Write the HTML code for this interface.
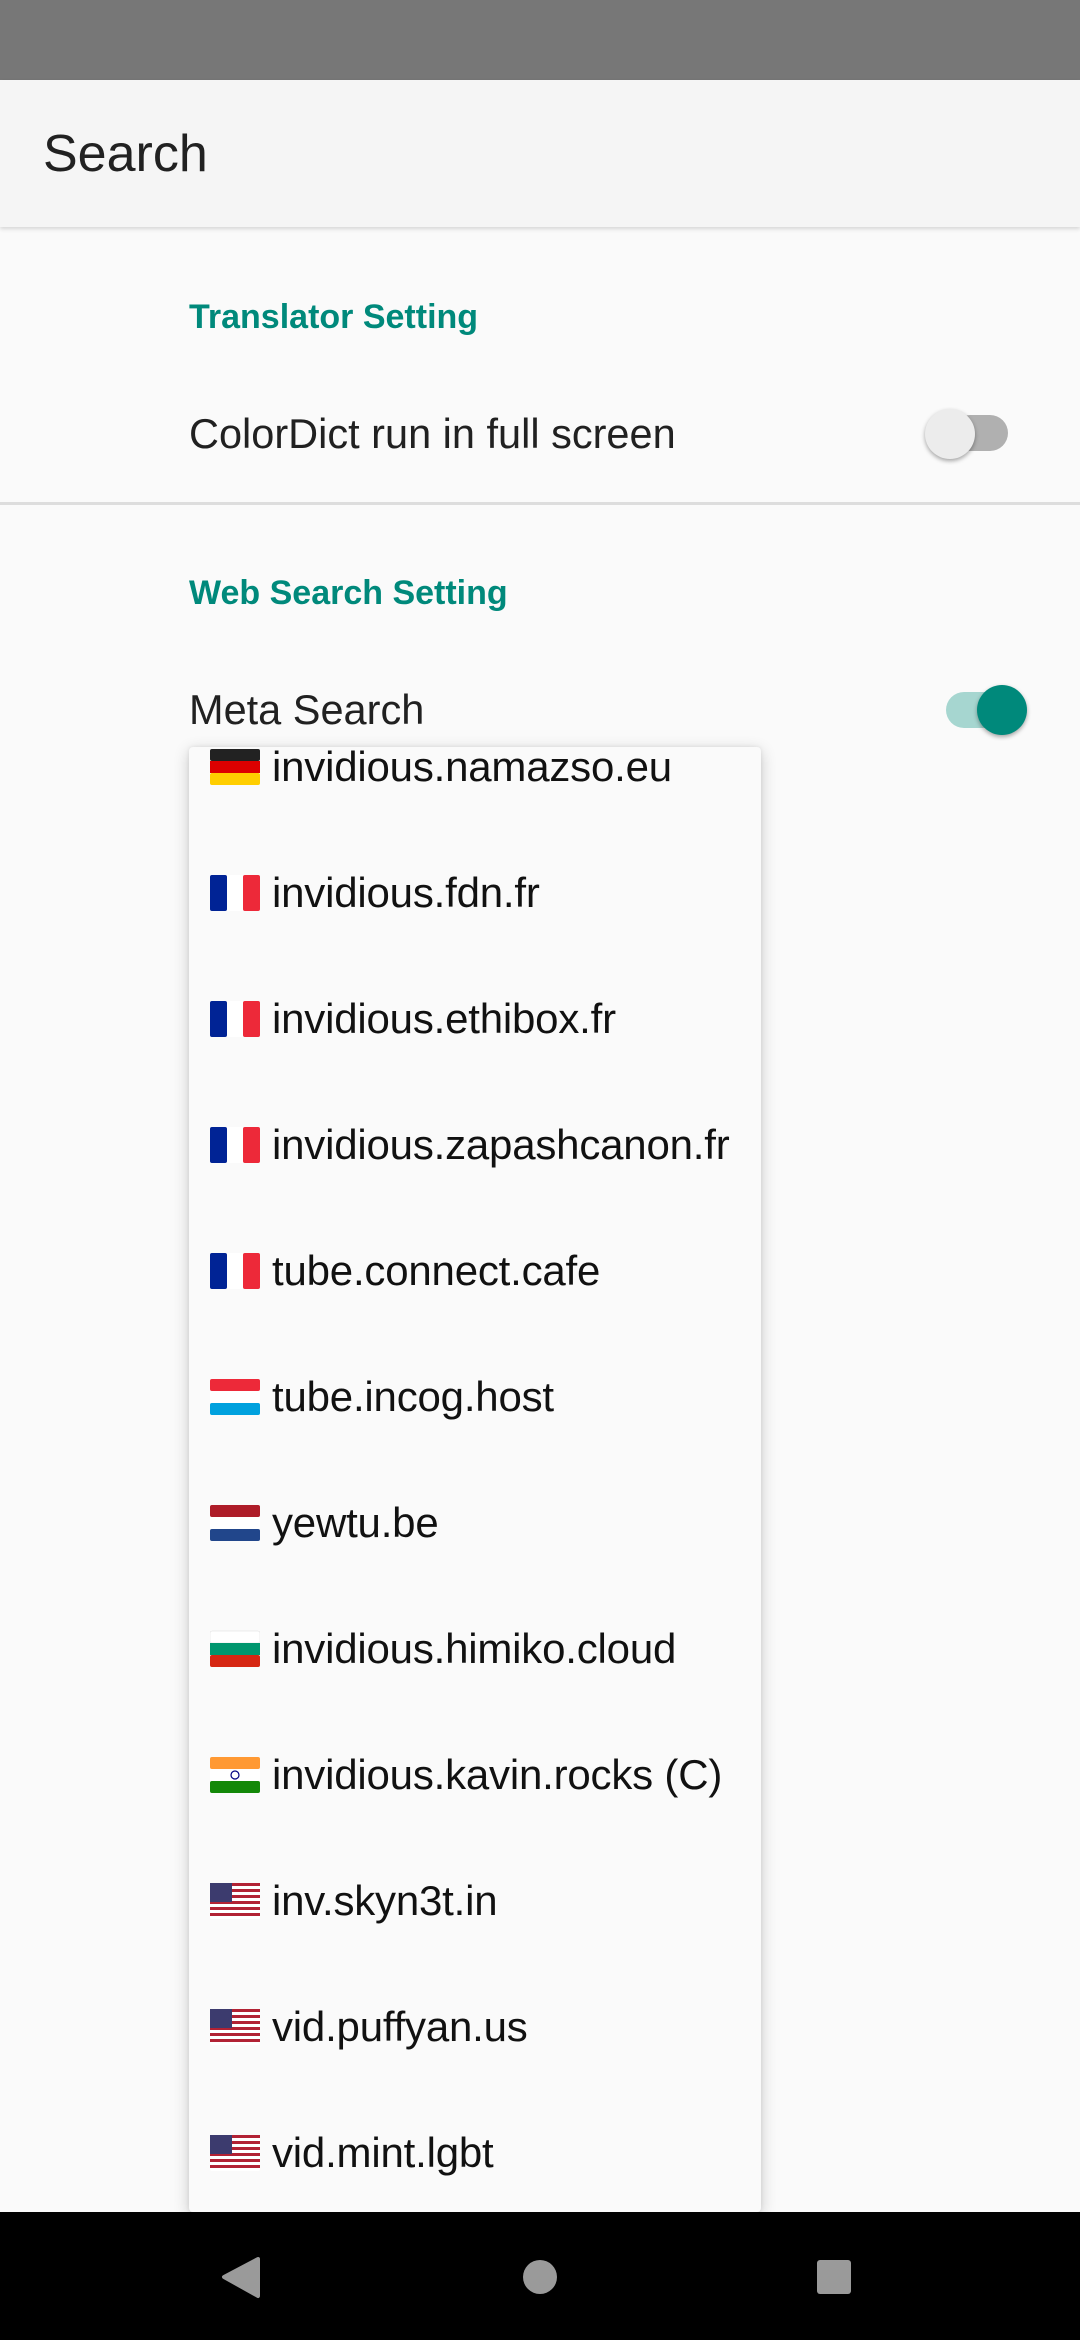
<!DOCTYPE html>
<html><head><meta charset="utf-8"><style>
*{margin:0;padding:0;box-sizing:border-box}
body{width:1080px;height:2340px;overflow:hidden;background:#fafafa;font-family:"Liberation Sans",sans-serif;position:relative;color:#212121}
.abs{position:absolute}
.status{left:0;top:0;width:1080px;height:80px;background:#777}
.bar{left:0;top:80px;width:1080px;height:147px;background:#f5f5f5;box-shadow:0 2px 4px rgba(0,0,0,.15)}
.title{left:43px;top:123px;font-size:52px;line-height:62px;color:#212121}
.cat{left:189px;font-size:34px;font-weight:bold;color:#00897b;line-height:44px}
.item{left:189px;font-size:41.5px;line-height:50px;color:#212121}
.div{left:0;top:502px;width:1080px;height:3px;background:#ddd}
.popup{left:189px;top:747px;width:572px;height:1465px;background:#fafafa;border-radius:4px;box-shadow:0 4px 16px rgba(0,0,0,.2),0 0 4px rgba(0,0,0,.08);overflow:hidden}
.row{position:absolute;left:0;height:60px;display:flex;align-items:center}
.row svg{margin-left:21px;width:50px;height:38px;flex:none}
.row span{margin-left:12px;font-size:42px;color:#111;white-space:nowrap;letter-spacing:-0.2px}
.nav{left:0;top:2212px;width:1080px;height:128px;background:#000}
</style></head><body>
<div class="abs status"></div>
<div class="abs bar"></div>
<div class="abs title">Search</div>
<div class="abs cat" style="top:295px">Translator Setting</div>
<div class="abs item" style="top:409px">ColorDict run in full screen</div>
<div class="abs" style="left:952px;top:415px;width:56px;height:36px;border-radius:18px;background:#b0b0b0"></div>
<div class="abs" style="left:925px;top:409px;width:50px;height:50px;border-radius:50%;background:#ececec;box-shadow:0 2px 4px rgba(0,0,0,.35)"></div>
<div class="abs div"></div>
<div class="abs cat" style="top:571px">Web Search Setting</div>
<div class="abs item" style="top:685px">Meta Search</div>
<div class="abs" style="left:946px;top:692px;width:60px;height:36px;border-radius:18px;background:#a6d6d0"></div>
<div class="abs" style="left:977px;top:685px;width:50px;height:50px;border-radius:50%;background:#00897b;box-shadow:0 2px 4px rgba(0,0,0,.35)"></div>

<div class="abs popup">
<div class="row" style="top:-10px"><svg viewBox="0 0 50 38"><rect y="1" width="50" height="12" rx="2" fill="#222"/><rect y="13" width="50" height="12" fill="#dd0000"/><rect y="25" width="50" height="12" rx="2" fill="#ffce00"/></svg><span>invidious.namazso.eu</span></div>
<div class="row" style="top:116px"><svg viewBox="0 0 50 38"><rect y="1" width="17" height="36" rx="2" fill="#002395"/><rect x="17" y="1" width="16" height="36" fill="#fff"/><rect x="33" y="1" width="17" height="36" rx="2" fill="#ed2939"/></svg><span>invidious.fdn.fr</span></div>
<div class="row" style="top:242px"><svg viewBox="0 0 50 38"><rect y="1" width="17" height="36" rx="2" fill="#002395"/><rect x="17" y="1" width="16" height="36" fill="#fff"/><rect x="33" y="1" width="17" height="36" rx="2" fill="#ed2939"/></svg><span>invidious.ethibox.fr</span></div>
<div class="row" style="top:368px"><svg viewBox="0 0 50 38"><rect y="1" width="17" height="36" rx="2" fill="#002395"/><rect x="17" y="1" width="16" height="36" fill="#fff"/><rect x="33" y="1" width="17" height="36" rx="2" fill="#ed2939"/></svg><span>invidious.zapashcanon.fr</span></div>
<div class="row" style="top:494px"><svg viewBox="0 0 50 38"><rect y="1" width="17" height="36" rx="2" fill="#002395"/><rect x="17" y="1" width="16" height="36" fill="#fff"/><rect x="33" y="1" width="17" height="36" rx="2" fill="#ed2939"/></svg><span>tube.connect.cafe</span></div>
<div class="row" style="top:620px"><svg viewBox="0 0 50 38"><rect y="1" width="50" height="12" rx="2" fill="#ed2939"/><rect y="13" width="50" height="12" fill="#fff"/><rect y="25" width="50" height="12" rx="2" fill="#00a1de"/></svg><span>tube.incog.host</span></div>
<div class="row" style="top:746px"><svg viewBox="0 0 50 38"><rect y="1" width="50" height="12" rx="2" fill="#ae1c28"/><rect y="13" width="50" height="12" fill="#fff"/><rect y="25" width="50" height="12" rx="2" fill="#21468b"/></svg><span>yewtu.be</span></div>
<div class="row" style="top:872px"><svg viewBox="0 0 50 38"><rect y="1" width="50" height="12" rx="2" fill="#fff" stroke="#ddd" stroke-width="0.5"/><rect y="13" width="50" height="12" fill="#00966e"/><rect y="25" width="50" height="12" rx="2" fill="#d62612"/></svg><span>invidious.himiko.cloud</span></div>
<div class="row" style="top:998px"><svg viewBox="0 0 50 38"><rect y="1" width="50" height="12" rx="2" fill="#ff9933"/><rect y="13" width="50" height="12" fill="#fff"/><rect y="25" width="50" height="12" rx="2" fill="#138808"/><circle cx="25" cy="19" r="4" fill="none" stroke="#000080" stroke-width="1.2"/></svg><span>invidious.kavin.rocks (C)</span></div>
<div class="row" style="top:1124px"><svg viewBox="0 0 50 38"><rect y="1" width="50" height="36" rx="2" fill="#fff"/><g fill="#b22234"><rect y="1" width="50" height="3"/><rect y="7" width="50" height="3"/><rect y="13" width="50" height="3"/><rect y="19" width="50" height="3"/><rect y="25" width="50" height="3"/><rect y="31" width="50" height="3"/></g><rect y="1" width="22" height="19" fill="#3c3b6e"/></svg><span>inv.skyn3t.in</span></div>
<div class="row" style="top:1250px"><svg viewBox="0 0 50 38"><rect y="1" width="50" height="36" rx="2" fill="#fff"/><g fill="#b22234"><rect y="1" width="50" height="3"/><rect y="7" width="50" height="3"/><rect y="13" width="50" height="3"/><rect y="19" width="50" height="3"/><rect y="25" width="50" height="3"/><rect y="31" width="50" height="3"/></g><rect y="1" width="22" height="19" fill="#3c3b6e"/></svg><span>vid.puffyan.us</span></div>
<div class="row" style="top:1376px"><svg viewBox="0 0 50 38"><rect y="1" width="50" height="36" rx="2" fill="#fff"/><g fill="#b22234"><rect y="1" width="50" height="3"/><rect y="7" width="50" height="3"/><rect y="13" width="50" height="3"/><rect y="19" width="50" height="3"/><rect y="25" width="50" height="3"/><rect y="31" width="50" height="3"/></g><rect y="1" width="22" height="19" fill="#3c3b6e"/></svg><span>vid.mint.lgbt</span></div>
</div>

<div class="abs nav">
<svg class="abs" style="left:0;top:0" width="1080" height="128">
<path d="M258 47 L224 65 L258 84 Z" fill="#9a9a9a" stroke="#9a9a9a" stroke-width="4" stroke-linejoin="round"/>
<circle cx="540" cy="65" r="17" fill="#9a9a9a"/>
<rect x="817" y="48" width="34" height="34" rx="3" fill="#9a9a9a"/>
</svg>
</div>
</body></html>
